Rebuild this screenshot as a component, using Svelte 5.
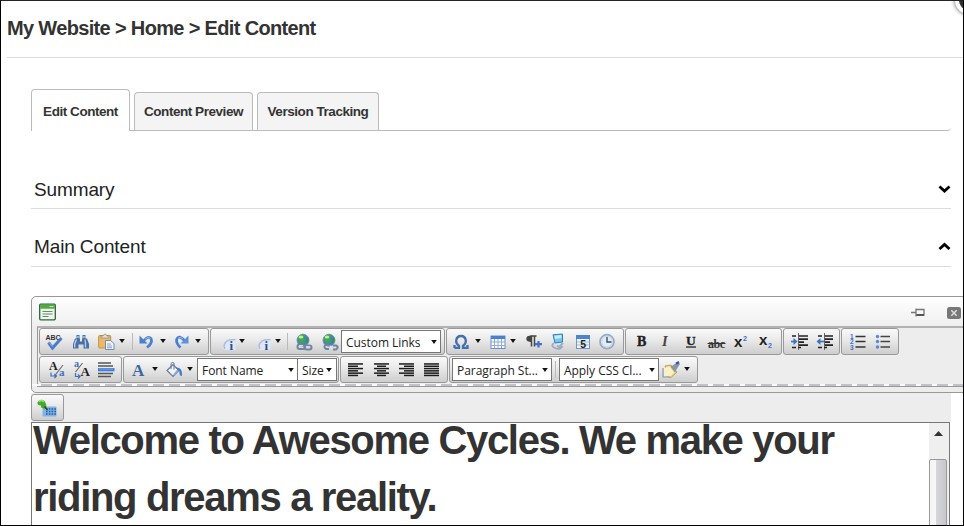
<script>
  const serif = 'font-family="Liberation Serif, serif"';
  const sans = 'font-family="Liberation Sans, sans-serif"';
  const bars = (rows) =>
    rows.map(([x, w], i) => `<rect x="${x}" y="${1.2 + i * 2.3}" width="${w}" height="1.500" fill="#1c1c1c"/>`).join('');

  const globe = `<circle cx="7" cy="6.200" r="6" fill="#4583c2" stroke="#748ba3" stroke-width=".8"/>
    <path d="M1.500 4Q4-.5 9 .8L7.500 4 9 6 6 9 3.500 8Z" fill="#43ad39"/><path d="M9.500 4.500 12.500 3.500 12.500 7 10 9.500Z" fill="#34983a"/>
    <ellipse cx="5" cy="3" rx="2.300" ry="1.500" fill="#d5f5d1" opacity=".85"/>`;

  const icons = {
    spell: `<text x="-.5" y="6" ${sans} font-size="7" font-weight="700" textLength="15" fill="#333">ABC</text>
      <path d="M2.500 8.500 6.500 14 15.500 4" fill="none" stroke="#4a7cc9" stroke-width="3"/><path d="M3 8.500 6.500 12.500" stroke="#8fb4ea" stroke-width="1"/>`,
    find: `<path d="M3.500 1h3v3.500h-3zM9.500 1h3v3.500h-3zM2 4.500h5v3h2v-3h5l2 5.500v4.500h-5.500V10.500h-5v4H0V10z" fill="#4a70a8"/>
      <path d="M3.500 5.500 1.700 10v3.500M12 5.500 12.500 9v4.500M5 2v2M11 2v2" fill="none" stroke="#b3cbea" stroke-width="1.400"/>`,
    paste: `<rect x=".7" y="1.500" width="12" height="12.500" rx="1" fill="#edb964" stroke="#c18f43"/><path d="M3 4V2h2L6 .3h2L9 2h2v2z" fill="#d9dde2" stroke="#8b8170" stroke-width=".6"/>
      <path d="M7.500 6.500h5l3.500 3v6H7.500z" fill="#edf4fc" stroke="#6785a8" stroke-width=".9"/><path d="M9 10h4M9 12h5M9 13.700h5" stroke="#7695bb" stroke-width=".8"/>`,
    undo: `<path d="M5 6.500Q9 1.500 12 4.500 14 9 8 13.500" fill="none" stroke="#4b80cf" stroke-width="2.800"/><path d="M.5 1.500V9.500h8z" fill="#4b80cf"/><path d="M6 5Q9.500 2 11.500 4.500" fill="none" stroke="#a8c7f2" stroke-width=".8"/>`,
    redo: `<path d="M10.500 6.500Q5 .5 2.800 5 1.500 9 6.500 13.500" fill="none" stroke="#4b80cf" stroke-width="2.800"/><path d="M14.500 1.500V9.500H6.500z" fill="#5d91dc"/><path d="M9 4.700Q5.500 2 4 4.500" fill="none" stroke="#a8c7f2" stroke-width=".8"/>`,
    info: `<path d="M1 16Q-1 10 4 6.500 8 4.500 12.500 5.500V16z" fill="#dce7f8"/><path d="M2 15Q-.5 10.500 4 7 7 5.300 12.500 5.700" fill="none" stroke="#a5b8dc" stroke-width="1.300"/>
      <text x="6.500" y="15.500" ${serif} font-size="13" font-weight="700" fill="#304c8c">i</text>`,
    link: globe + `<g fill="none" stroke="#71859d" stroke-width="2"><rect x="1.500" y="10.500" width="7.500" height="4.500" rx="2"/><rect x="8.500" y="11.500" width="7" height="4" rx="2"/></g><path d="M3 11.500h4M10 12.500h4" stroke="#ccd9e8"/>`,
    unlink: globe + `<g fill="none" stroke="#71859d" stroke-width="2"><path d="M7 10.500H4Q.8 12.500 4 15h3M11 11.500h3Q17.500 13 14 15.500h-3"/></g><path d="M8 11.500 10 15" stroke="#e8f1fa"/>`,
    omega: `<path d="M1.500 13.800H6V12Q2.800 9.500 3.200 6.500 3.800 2 8 2T12.800 6.500Q13.200 9.500 10 12V13.800h4.500V11M1.500 14V11" fill="none" stroke="#426fad" stroke-width="2.300"/>`,
    table: `<rect x="1" y="2" width="14" height="12.500" fill="#f9fcff" stroke="#6d91c6"/><rect x="1" y="2" width="14" height="3" fill="#4a7ece"/><path d="M1 8h14M1 11.500h14M4.500 5v9M8 5v9M11.500 5v9" stroke="#91acd2" stroke-width="1"/>`,
    para: `<path d="M5.500 1.500V8Q.3 8 .3 4.700T5.500 1.500z" fill="#444"/><path d="M5.500 2V12.500M8.500 2V12.500M4.500 2h6" stroke="#444" stroke-width="1.500"/><path d="M12.500 7v6.500M9 10.200h7" stroke="#3c74d0" stroke-width="2.200"/>`,
    module: `<path d="M3 .8 12.500 0 12.500 8 5 9Z" fill="#73c7f3" stroke="#357fae"/><path d="M4.300 1.800 11.300 1 11.500 4 5 5z" fill="#c6edff"/><path d="M4 9Q0 12 5 14 10 16.500 12.500 12M7 11.500l2 1.500 4-4" fill="none" stroke="#9badc5" stroke-width="1.800"/>`,
    date: `<rect x="1.500" y="1.500" width="13" height="13" fill="#edf4fc" stroke="#7496c8"/><rect x="1" y="1" width="14" height="4" fill="#4e83d0"/><path d="M2 8h12M2 11h12" stroke="#a5bddb"/><text x="5.300" y="13.800" ${sans} font-size="10.500" font-weight="700" fill="#222">5</text>`,
    clock: `<circle cx="8" cy="7.700" r="7" fill="#e0edf9" stroke="#9aabc1" stroke-width="1.700"/><circle cx="8" cy="7.700" r="5.300" fill="none" stroke="#b7cde6" stroke-width=".8"/><path d="M8 3V8h4.500" fill="none" stroke="#3b4a64" stroke-width="1.400"/>`,
    bold: `<text x="3" y="12" ${serif} font-size="14" font-weight="700" fill="#222" stroke="#222" stroke-width=".4">B</text>`,
    italic: `<text x="5" y="12" ${serif} font-size="14.500" font-style="italic" font-weight="700" fill="#444">I</text>`,
    underline: `<text x="3" y="10.500" ${serif} font-size="13.500" font-weight="700" fill="#222" stroke="#222" stroke-width=".3">U</text><path d="M3 13h10" stroke="#222" stroke-width="1.300"/>`,
    strike: `<text x="0" y="13.500" ${serif} font-size="12" font-weight="700" textLength="17" fill="#333">abc</text><path d="M-.5 9.500h18" stroke="#333"/>`,
    sup: `<text x="1" y="13" ${sans} font-size="15" font-weight="700" fill="#222">x</text><text x="10" y="6.500" ${sans} font-size="7" font-weight="700" fill="#3b70c6">2</text>`,
    sub: `<text x="1" y="10.500" ${sans} font-size="15" font-weight="700" fill="#222">x</text><text x="10" y="13.500" ${sans} font-size="7" font-weight="700" fill="#3b70c6">2</text>`,
    indent: `<path d="M1 2h4M7 2h10M7 5.200h10M7 8.200h6M7 11.200h10M1 13.500h4M7 13.500h3" stroke="#222" stroke-width="1.700"/><path d="M7.500 -1V16" stroke="#666" stroke-dasharray="2 1"/><path d="M0 7.500h4" stroke="#3e73c7" stroke-width="1.700"/><path d="M2.500 4 6.500 7.500 2.500 11z" fill="#3e73c7"/>`,
    outdent: `<path d="M1 2h4M7 2h9M7 5.200h9M7 8.200h6M7 11.200h9M1 13.500h4M7 13.500h3" stroke="#222" stroke-width="1.700"/><path d="M7.500 -1V16" stroke="#666" stroke-dasharray="2 1"/><path d="M3 7.500h4" stroke="#3e73c7" stroke-width="1.700"/><path d="M3.500 4-.5 7.500 3.500 11z" fill="#3e73c7"/>`,
    numbers: `<g ${sans} font-size="6.500" font-weight="700" fill="#3d70c3"><text x="0" y="4.700">1</text><text x="0" y="10">2</text><text x="0" y="15.500">3</text></g><path d="M5.500 2.500h10M5.500 7.500h10M5.500 13h10" stroke="#333" stroke-width="1.300"/>`,
    bullets: `<g fill="#5a86d4"><circle cx="2.500" cy="2.500" r="1.700"/><circle cx="2.500" cy="7.500" r="1.700"/><circle cx="2.500" cy="13" r="1.700"/></g><path d="M5.500 2.500h9.500M5.500 7.500h9.500M5.500 13h9.500" stroke="#444" stroke-width="1.300"/>`,
    lower: `<text x="0" y="7.500" ${serif} font-size="12" font-weight="700" fill="#222">A</text><path d="M5.500 14 14 3" stroke="#666" stroke-width="1.100"/><text x="10" y="13.500" ${serif} font-size="11" font-weight="700" fill="#3d70c3">a</text><path d="M2 10.500v3.500h5M5.500 12l2 2-2 2" fill="none" stroke="#3d70c3" stroke-width="1.200"/>`,
    upper: `<text x="0" y="4.500" ${serif} font-size="10" font-weight="700" fill="#3d70c3">a</text><path d="M1.500 10 8.500 1" stroke="#666" stroke-width="1.100"/><text x="6.500" y="13.500" ${serif} font-size="13" font-weight="700" fill="#222">A</text><path d="M1.500 11v3.500h4M4 12.500l2 2-2 2" fill="none" stroke="#3d70c3" stroke-width="1.200"/>`,
    rule: `<path d="M0 1h13M0 4h15M0 11.500h15M0 14.500h13" stroke="#555" stroke-width="1.400"/><path d="M0 7.700h16.500" stroke="#3d78da" stroke-width="3.200"/><path d="M1 7.200h14" stroke="#82adf0" stroke-width=".8"/>`,
    color: `<text x="1" y="13.500" ${serif} font-size="17" font-weight="700" fill="#3c67a2">A</text>`,
    fill: `<path d="M1 8.500 7 2.500 13 8.500 7 14.500Z" fill="#eef4fa" stroke="#667c98" stroke-width="1.200"/><path d="M5 7V1.500Q6-.5 8 1V7.500" fill="none" stroke="#667c98"/><path d="M8 13 12 8.500" stroke="#89a9d5" stroke-width="2"/><path d="M9.500 5.500Q17 5 16 14 13 14 13.500 9.500z" fill="#427bc6"/>`,
    left: bars([[0, 15], [0, 10], [0, 15], [0, 10], [0, 15], [0, 10]]),
    center: bars([[0, 15], [3, 9], [0, 15], [3, 9], [0, 15], [3, 9]]),
    right: bars([[0, 15], [5, 10], [0, 15], [5, 10], [0, 15], [5, 10]]),
    full: bars([[0, 15], [0, 15], [0, 15], [0, 15], [0, 15], [0, 15]]),
    brush: `<path d="M2 4 8 3 14 10 8 15.500 3 14Q5 11 2 4Z" fill="#f1d776" stroke="#a99457" stroke-width=".8"/><path d="M1 6 7 4.500 11 10.500 7 14.500H1z" fill="#f9f1c5"/><path d="M0 6v9h7M8 4.500l4.500 5.500" fill="none" stroke="#8898a8" stroke-width="1.200"/><path d="M8 4.500 15 0 17 2 12.500 9z" fill="#8996a6"/><path d="M13 1.700 16 0" stroke="#354dc1" stroke-width="2.200"/>`,
    caret: '<path d="M.2 0H5.800L3 4Z" fill="#111"/>'
  };

  // Each entry: item name, width, space before it.
  const car = (gap) => ['caret', 6, gap];
  const sep = (gap) => ['sep', 1, gap];
  const rows = [
    [
      { w: 170, items: [['spell', 16, 6], ['find', 16, 11], ['paste', 16, 9], car(5), sep(7), ['undo', 16, 6], car(5), ['redo', 16, 8], car(5)] },
      { w: 235, items: [['info', 16, 12], car(0), ['info', 16, 13], car(1), sep(6), ['link', 16, 8], ['unlink', 16, 10], ['Custom Links', 100, 3]] },
      { w: 178, items: [['omega', 16, 6], car(6), ['table', 16, 9], car(4), ['para', 16, 10], ['module', 16, 8], ['date', 16, 9], ['clock', 16, 8]] },
      { w: 157, items: [['bold', 16, 8], ['italic', 16, 7], ['underline', 16, 10], ['strike', 16, 9], ['sup', 16, 9], ['sub', 16, 9]] },
      { w: 57, items: [['indent', 16, 7], ['outdent', 16, 10]] },
      { w: 58, items: [['numbers', 16, 8], ['bullets', 16, 9]] }
    ],
    [
      { w: 83, items: [['lower', 16, 9], ['upper', 16, 9], ['rule', 16, 8]] },
      { w: 216, items: [['color', 16, 7], car(5), ['fill', 16, 8], car(5), ['Font Name', 101, 4], ['Size', 40, -1]] },
      { w: 108, items: [['left', 16, 7], ['center', 16, 10], ['right', 16, 9], ['full', 16, 9]] },
      { w: 249, items: [['Paragraph St...', 100, 2], sep(3), ['Apply CSS Cl...', 100, 3], ['brush', 16, 4], car(5)] }
    ]
  ];
  const tabs = ['Edit Content', 'Content Preview', 'Version Tracking'];
</script>

<div class="frame">
  <div class="corner"></div>
  <h1>My Website &gt; Home &gt; Edit Content</h1>
  <main>
    <nav>
      {#each tabs as tab, i}
        <button class="tab t{i}" class:active={i === 0}>{tab}</button>
      {/each}
    </nav>
    <section class="summary"><span>Summary</span><svg width="13" height="9" viewBox="0 0 13 9"><path d="M1.500 1.500 6.500 6 11.500 1.500" /></svg></section>
    <section class="content"><span>Main Content</span><svg width="13" height="9" viewBox="0 0 13 9"><path d="M1.500 7 6.500 2.500 11.500 7" /></svg></section>

    <div class="window">
      <header>
        <svg width="18" height="17" viewBox="0 0 18 17"><rect x=".7" y=".2" width="15.600" height="15.600" rx="1" fill="#edf5ec" stroke="#29653a" stroke-width="1.300" /><rect x="1.200" y=".7" width="14.600" height="4" fill="#4fac3d" /><path d="M10.500 2.500h4" stroke="#bfe7b5" /><path d="M3.500 7.500h10M3.500 10h10M3.500 12.500h6" stroke="#648a6a" /></svg>
        <i></i>
        <svg width="14" height="10" viewBox="0 0 14 10"><path d="M0 5.500h5M5 1.500v8M5.500 2.500h7.500v5.500h-7.500" fill="none" stroke="#777" stroke-width="1.300" /><path d="M5.500 8h7.500" stroke="#555" stroke-width="2" /></svg>
        <svg class="close" width="14" height="12" viewBox="0 0 14 12"><rect width="14" height="12" rx="2.500" fill="#777" /><path d="M4.300 3.300l5.400 5.400M9.700 3.300l-5.400 5.400" stroke="#ddd" stroke-width="1.500" /></svg>
      </header>
      <div class="tools">
        {#each rows as row}
          <div class="row">
            {#each row as group}
              <div class="group" style:width="{group.w}px">
                {#each group.items as [name, w, gap]}
                  {#if name === 'sep'}
                    <span class="sep" style:margin-left="{gap}px"></span>
                  {:else if icons[name]}
                    <svg class={name} width={w} height={name === 'caret' ? 4 : 16} viewBox="0 0 {w} {name === 'caret' ? 4 : 16}" style:margin-left="{gap}px">{@html icons[name]}</svg>
                  {:else}
                    <div class="select" class:small={name === 'Size'} style:width="{w}px" style:margin-left="{gap}px">
                      <span>{name}</span><svg width="6" height="4" viewBox="0 0 6 4">{@html icons.caret}</svg>
                    </div>
                  {/if}
                {/each}
              </div>
            {/each}
          </div>
        {/each}
        <svg class="dashes" width="932" height="2"><path d="M-6 1H932" stroke="#fafafa" stroke-width="2" /><path d="M3 1H932" stroke="#858b94" stroke-width="1.200" stroke-dasharray="11 5" /></svg>
      </div>
    </div>
    <div class="under">
      <button class="pin" aria-label="Pin toolbar"><svg width="21" height="18" viewBox="0 0 21 18"><rect x="5.500" y="7.500" width="14" height="10" rx="1" fill="#7db4ea" /><path d="M9 10h10M9 12.500h10M9 15h10" stroke="#2b5794" stroke-width="1.500" stroke-dasharray="1.600 1.200" /><path d="M.5 3.500Q3-1 7.500 2L9 5 9.500 8 8.500 10 4 8.500 4 6.500Q0 6.500 .5 3.500Z" fill="#45a929" /><path d="M2 2.700Q5 .3 6.500 3" fill="none" stroke="#9be06d" stroke-width="1.600" /><path d="M7.500 7.500l3 3.500" stroke="#34451f" stroke-width="1.300" /></svg></button>
    </div>
    <div class="editor">
      <div class="text"><p>Welcome to Awesome Cycles. We make your</p><p>riding dreams a reality.</p></div>
      <div class="scroll"><svg width="9" height="5" viewBox="0 0 9 5"><path d="M0 5 4.500 0 9 5Z" fill="#333" /></svg><div class="thumb"></div></div>
    </div>
  </main>
</div>

<style>
  * { box-sizing: border-box; }
  svg { display: block; flex: none; overflow: visible; }
  .frame { position: relative; width: 964px; height: 526px; overflow: hidden; border: 1px solid #000; border-top-color: #272326; background: #fff; font-family: "Liberation Sans", Arial, sans-serif; color: #333; }
  .corner { position: absolute; right: -19px; top: -14px; width: 27px; height: 27px; border: 4px solid #fff; border-radius: 50%; background: #333; box-shadow: 0 0 4px #555; }
  h1 { margin: 0 0 0 6px; height: 57px; border-bottom: 1px solid #dcdcdc; font-size: 20px; line-height: 54px; font-weight: 700; letter-spacing: -.66px; white-space: nowrap; }
  main { margin-left: 30px; }
  nav { display: flex; align-items: flex-end; gap: 4px; width: 920px; height: 73px; border-bottom: 1px solid #bbb; border-radius: 0 0 4px 0; }
  .tab { height: 38px; padding: 0; border: 1px solid #bbb; border-bottom: 0; border-radius: 4px 4px 0 0; background: #f4f4f4; font: 700 13.5px/37px "Liberation Sans", Arial, sans-serif; color: #333; letter-spacing: -.45px; white-space: nowrap; }
  .tab.active { height: 42px; margin-bottom: -1px; padding-top: 2px; background: #fff; }
  .t0 { width: 99px; }
  .t1 { width: 119px; }
  .t2 { width: 122px; }
  section { display: flex; align-items: center; justify-content: space-between; width: 920px; border-bottom: 1px solid #dcdcdc; padding-left: 3px; font-size: 19px; letter-spacing: -.12px; color: #222; }
  section span { padding-top: 1px; }
  .summary { height: 78px; padding-top: 39px; }
  .content { height: 58px; padding-top: 18px; }
  section path { fill: none; stroke: #000; stroke-width: 2.800; }
  .window { width: 960px; height: 97px; margin-top: 29px; padding-left: 6px; border: 1px solid #999; border-radius: 5px; background: #ededed; }
  header { display: flex; align-items: center; width: 932px; height: 29px; margin-left: -6px; padding: 1px 3px 0 7px; border-radius: 5px 0 0; background: linear-gradient(#fff, #efefef); }
  header i { flex: 1; }
  .close { margin: 1px 0 0 22px; }
  .tools { width: 930px; height: 61px; border: 1px solid #999; border-top: 2px solid #b2b2b2; margin-left: -1px; background: #ededed; }
  .row { display: flex; gap: 1px; padding-left: 1px; height: 28px; }
  .group { flex: none; display: flex; align-items: center; height: 27px; border: 1px solid #999; border-radius: 3px; background: linear-gradient(#fafafa, #e9e9e9 45%, #cdcdcd); }
  .group > .caret { margin-bottom: 2px; }
  .sep { width: 1px; height: 17px; background: #bbb; }
  .select { flex: none; display: flex; align-items: center; justify-content: space-between; height: 23px; padding: 0 3px 0 4px; border: 1px solid #777; background: #fff; font-family: "Open Sans", "Noto Sans", sans-serif; font-size: 12px; line-height: 21px; letter-spacing: -.05px; color: #222; white-space: nowrap; }
  .select span { padding-top: 1px; }
  .small { padding-right: 4px; }
  .under { display: flex; width: 920px; height: 29px; padding-top: 1px; background: #ededed; }
  .pin { display: flex; align-items: center; width: 33px; height: 27px; padding: 0 0 0 5px; border: 1px solid #999; border-radius: 3px; background: linear-gradient(#fafafa, #e9e9e9 45%, #cdcdcd); }
  .editor { display: flex; width: 919px; height: 110px; border: 1px solid #777; background: #fff; }
  .text { flex: 1; padding-left: 1px; }
  p { margin: 0; font-size: 40px; line-height: 57px; font-weight: 700; letter-spacing: -1.32px; white-space: nowrap; }
  p:first-child { margin-top: -11px; }
  .scroll { width: 20px; background: #efefef; }
  .scroll svg { margin: 8px 0 0 5px; }
  .thumb { width: 18px; height: 90px; margin-top: 23px; border: 1px solid #999; border-radius: 2px; background: linear-gradient(90deg, #f6f6f6 0 35%, #d5d6d9 40%, #c8c8cc); }
</style>
